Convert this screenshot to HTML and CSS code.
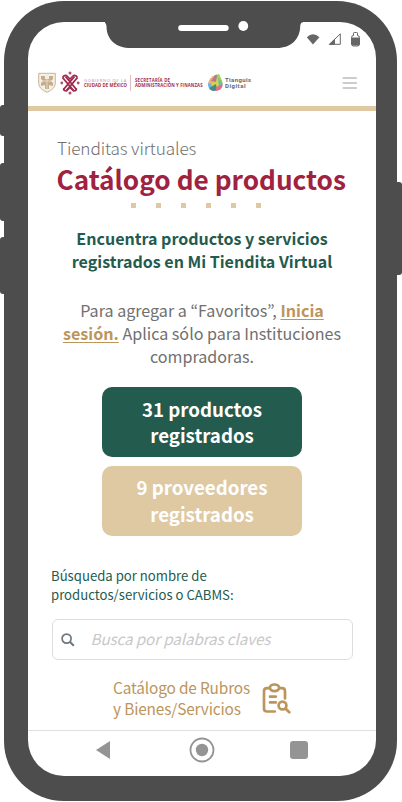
FILE: index.html
```html
<!DOCTYPE html>
<html lang="es">
<head>
<meta charset="utf-8">
<title>Tienditas virtuales</title>
<link rel="stylesheet" href="styles.css">
</head>
<body>
<div class="phone">
  <i class="key key-mute"></i><i class="key key-up"></i><i class="key key-down"></i><i class="key key-power"></i>
  <svg class="notch" width="198" height="28" viewBox="0 0 198 28"><path d="M0 0H198V1.2Q195.500 1.200 195.200 5C195.200 18 186 27 172 27H26C11 27 1.500 19 1.500 5Q1 1 -2 1Z" fill="#4d4d4d"/><rect x="73.200" y="4" width="50.500" height="6" rx="3" fill="#fff"/><circle cx="138.300" cy="5" r="4.900" fill="#fff"/></svg>
  <div class="screen">
    <div class="status">
      <svg width="55" height="17" viewBox="0 0 55 17">
        <path d="M.8 5.300Q7 -.6 13.400 5.300L7 12.400Z" fill="#666"/>
        <path d="M34.300 1.800V12.300H23.600Z" fill="none" stroke="#666"/><path d="M22.500 12.800L29 6.500V12.800Z" fill="#666"/>
        <path d="M45.500 5.500Q45.500 3.500 47.500 3.500V1.200Q47.500 .5 48.500 .5H50.500Q51.500 .5 51.500 1.200V3.500Q53.500 3.500 53.500 5.500V12Q53.500 14 51.500 14H47.500Q45.500 14 45.500 12Z" fill="#fff" stroke="#666"/><path d="M46 5.600H53V13.500H46Z" fill="#666"/>
      </svg>
    </div>
    <header class="topbar">
      <svg class="logos" width="220" height="26" viewBox="0 0 220 26">
        <path d="M.7 3.300H17.300V13Q17.300 19 9 22.300Q.7 19 .7 13Z" fill="#f5efe5" stroke="#c8b698"/>
        <path d="M3 6H7V9H11V6H15V9L13 11L15 13V16L11 15V19H7V15L3 16V13L5 11L3 9Z" fill="#c5ae8c"/><path d="M9 5V20M4 11H14" stroke="#ede3d3" stroke-width=".8"/>
        <g fill="none" stroke="#9f2a50" stroke-width="1.900">
          <path d="M25.500 19.500L36.500 6.500M28.500 20.500L39.500 7.500M38.500 19.500L27.500 6.500M35.500 20.500L24.500 7.500"/>
          <path d="M24.500 7.500Q26 5 28.500 5.500L32 9L35.500 5.500Q38.500 5 39.500 7.500M25.500 18.500Q25.500 21 28.500 21L32 17.500L35.500 21Q38.500 21 38.500 18.500" stroke-width="1.600"/>
        </g>
        <g fill="#b94b6b"><circle cx="32" cy="3" r="1.500"/><circle cx="32" cy="23" r="1.500"/><circle cx="23.800" cy="13" r="1.400"/><circle cx="40.200" cy="13" r="1.400"/></g>
        <text class="tiny pale" x="46" y="11.800" textLength="42.500">GOBIERNO DE LA</text>
        <text class="tiny strong" x="46" y="16.900" textLength="43">CIUDAD DE MÉXICO</text>
        <path d="M92.500 5V21" stroke="#dcb3bf" stroke-width=".9"/>
        <text class="tiny strong" x="97" y="11.800" textLength="35">SECRETARÍA DE</text>
        <text class="tiny strong" x="97" y="16.900" textLength="67.500">ADMINISTRACIÓN Y FINANZAS</text>
        <path d="M178 5Q171 7 170 14L177 17Z" fill="#e9b07c"/>
        <path d="M170 13Q169 18 174 20L178 15Z" fill="#70b8d8"/>
        <path d="M177 5L181 4Q184 10 185 14L178 17Z" fill="#a7cd58"/>
        <path d="M180 8Q184 11 184.500 16L179 18Z" fill="#60c5a0"/>
        <path d="M174 13L180 8L181 18L173 19Z" fill="#d6d44c"/>
        <path d="M171 18L178 14L179 20.500Q173 22 171 18Z" fill="#438c8a"/>
        <path d="M178 17L184.500 14Q185 20 178 21Z" fill="#dc708f"/>
        <path d="M173 11L177 5L179 5L178 12Z" fill="#ba7890"/>
        <text class="tian" x="187" y="12" textLength="26">Tianguis</text>
        <text class="tian" x="187" y="18" textLength="20.500">Digital</text>
      </svg>
      <svg class="menu" width="16" height="14" viewBox="0 0 16 14"><path d="M1.500 2H14M1.500 7H14M1.500 12H14" stroke="#ccc" stroke-width="2.200" stroke-linecap="round"/></svg>
    </header>
    <main class="content">
      <p class="kicker">Tienditas virtuales</p>
      <h1 class="title">Catálogo de productos</h1>
      <div class="dots"><i></i><i></i><i></i><i></i><i></i><i></i></div>
      <p class="lead">Encuentra productos y servicios<br>registrados en Mi Tiendita Virtual</p>
      <p class="note">Para agregar a “Favoritos”, <a>Inicia</a><br><a>sesión.</a> Aplica sólo para Instituciones<br>compradoras.</p>
      <div class="stat green">31 productos<br>registrados</div>
      <div class="stat tan">9 proveedores<br>registrados</div>
      <p class="label">Búsqueda por nombre de<br>productos/servicios o CABMS:</p>
      <div class="search">
        <svg width="14" height="14" viewBox="0 0 14 14"><circle cx="5.600" cy="5.600" r="4.500" fill="none" stroke="#6c757d" stroke-width="1.700"/><path d="M9 9L12.800 12.800" stroke="#6c757d" stroke-width="2"/></svg>
        <span>Busca por palabras claves</span>
      </div>
      <div class="catalog">
        <span>Catálogo de Rubros<br>y Bienes/Servicios</span>
        <svg width="29" height="31" viewBox="0 0 29 31" fill="none" stroke="#bc955c" stroke-width="2.700" stroke-linecap="round" stroke-linejoin="round"><path d="M7.500 5.200H5Q2 5.200 2 8.200V25.500Q2 28.500 5 28.500H12.800M17.500 5.200H20Q23 5.200 23 8.200V15.500"/><ellipse cx="12.500" cy="4.800" rx="4.600" ry="3.300"/><path d="M8 13.700H13.800M8 19.400H13.800"/><circle cx="20.500" cy="22.500" r="3.900"/><path d="M23.700 25.700L27.300 29.300"/></svg>
      </div>
    </main>
    <nav class="nav">
      <svg width="16" height="20" viewBox="0 0 16 20"><path d="M1 10L15 1V19Z" fill="#949494"/></svg>
      <svg class="home" width="26" height="26" viewBox="0 0 26 26"><circle cx="13" cy="13" r="11.500" fill="none" stroke="#949494" stroke-width="1.800"/><circle cx="13" cy="13" r="6.200" fill="#949494"/></svg>
      <i class="square"></i>
    </nav>
  </div>
</div>
</body>
</html>
```

FILE: styles.css
```css
* { box-sizing: border-box; }
body { margin: 0; width: 402px; height: 802px; padding: 1px 5px 0 4px; overflow: hidden; background: #fff; font-family: "Noto Sans CJK KR", "Noto Sans", sans-serif; }
p, h1 { margin: 0; }
svg { display: block; flex: none; }
.phone { position: relative; width: 393px; height: 800px; padding: 21px 21px 25px 24px; border-radius: 60px; background: #4d4d4d; }
.key { position: absolute; left: -4px; width: 8px; border-radius: 3px 0 0 3px; background: #4d4d4d; }
.key-mute { top: 104px; height: 31px; }
.key-up { top: 162px; height: 58px; }
.key-down { top: 236px; height: 57px; }
.key-power { left: auto; right: -5px; top: 181px; height: 93px; border-radius: 0 3px 3px 0; }
.notch { position: absolute; left: 101px; top: 20px; z-index: 1; }
.screen { width: 348px; height: 754px; border-radius: 36px; overflow: hidden; background: #fff; display: flex; flex-direction: column; }
.status { height: 38px; padding: 10px 15px 0 0; display: flex; justify-content: flex-end; flex: none; }
.topbar { height: 51px; padding: 0 18px 0 10px; border-bottom: 5px solid #dec9a3; display: flex; align-items: center; justify-content: space-between; flex: none; }
.logos { margin-top: -1px; }
.tiny { font: 4.300px "Open Sans", sans-serif; }
.pale { fill: #c890a2; }
.strong { fill: #9f2a50; font-weight: 700; }
.tian { font: bold 6px Roboto, sans-serif; fill: #686868; }
.content { height: 619px; padding: 25px 23px 0; display: flex; flex-direction: column; flex: none; }
.kicker { margin-left: 6px; font-size: 17.200px; letter-spacing: -.12px; line-height: 24px; font-weight: 200; color: #707070; }
.title { margin: 1px 0 0 5.500px; font-size: 26.200px; line-height: 36px; font-weight: 700; color: #9f2241; white-space: nowrap; }
.dots { margin: 6px 0 0 80px; display: flex; gap: 20px; }
.dots i { width: 5px; height: 5px; background: #dec9a3; }
.lead { margin-top: 19px; font-size: 16.050px; line-height: 23px; font-weight: 700; color: #235b4e; text-align: center; white-space: nowrap; }
.note { margin-top: 26px; font-size: 16.100px; line-height: 23px; color: #707070; text-align: center; white-space: nowrap; }
.note a { font-weight: 700; color: #bc955c; text-decoration: underline; text-decoration-thickness: 1px; text-underline-offset: 2px; }
.stat { width: 200px; height: 70px; padding-top: 9px; margin: 19px auto 0; border-radius: 10px; color: #fff; font-size: 18.700px; line-height: 26px; font-weight: 700; text-align: center; }
.green { background: #235b4e; }
.tan { margin-top: 9px; padding-top: 8px; line-height: 26.500px; background: #dec9a3; }
.label { margin-top: 30px; font-size: 13.150px; line-height: 19px; color: #235b4e; }
.search { margin: 15px 0 0 .5px; width: 301px; height: 41px; padding-left: 8px; border: 1px solid #ddd; border-radius: 6px; display: flex; align-items: center; gap: 16px; }
.search span { margin-top: -3px; font-size: 15.200px; letter-spacing: -.1px; line-height: 24px; font-style: italic; color: #c8c8c8; }
.catalog { margin: 17px 0 0 62px; display: flex; gap: 12px; align-items: center; color: #bc955c; font-size: 15.400px; letter-spacing: -.15px; line-height: 21px; white-space: nowrap; }
.nav { height: 40px; border-top: 1px solid #e0e0e0; display: flex; align-items: center; padding: 0 68px 2px 67px; justify-content: space-between; flex: none; }
.home { margin-left: 2px; }
.square { width: 18px; height: 18px; border-radius: 3px; background: #949494; }
```
